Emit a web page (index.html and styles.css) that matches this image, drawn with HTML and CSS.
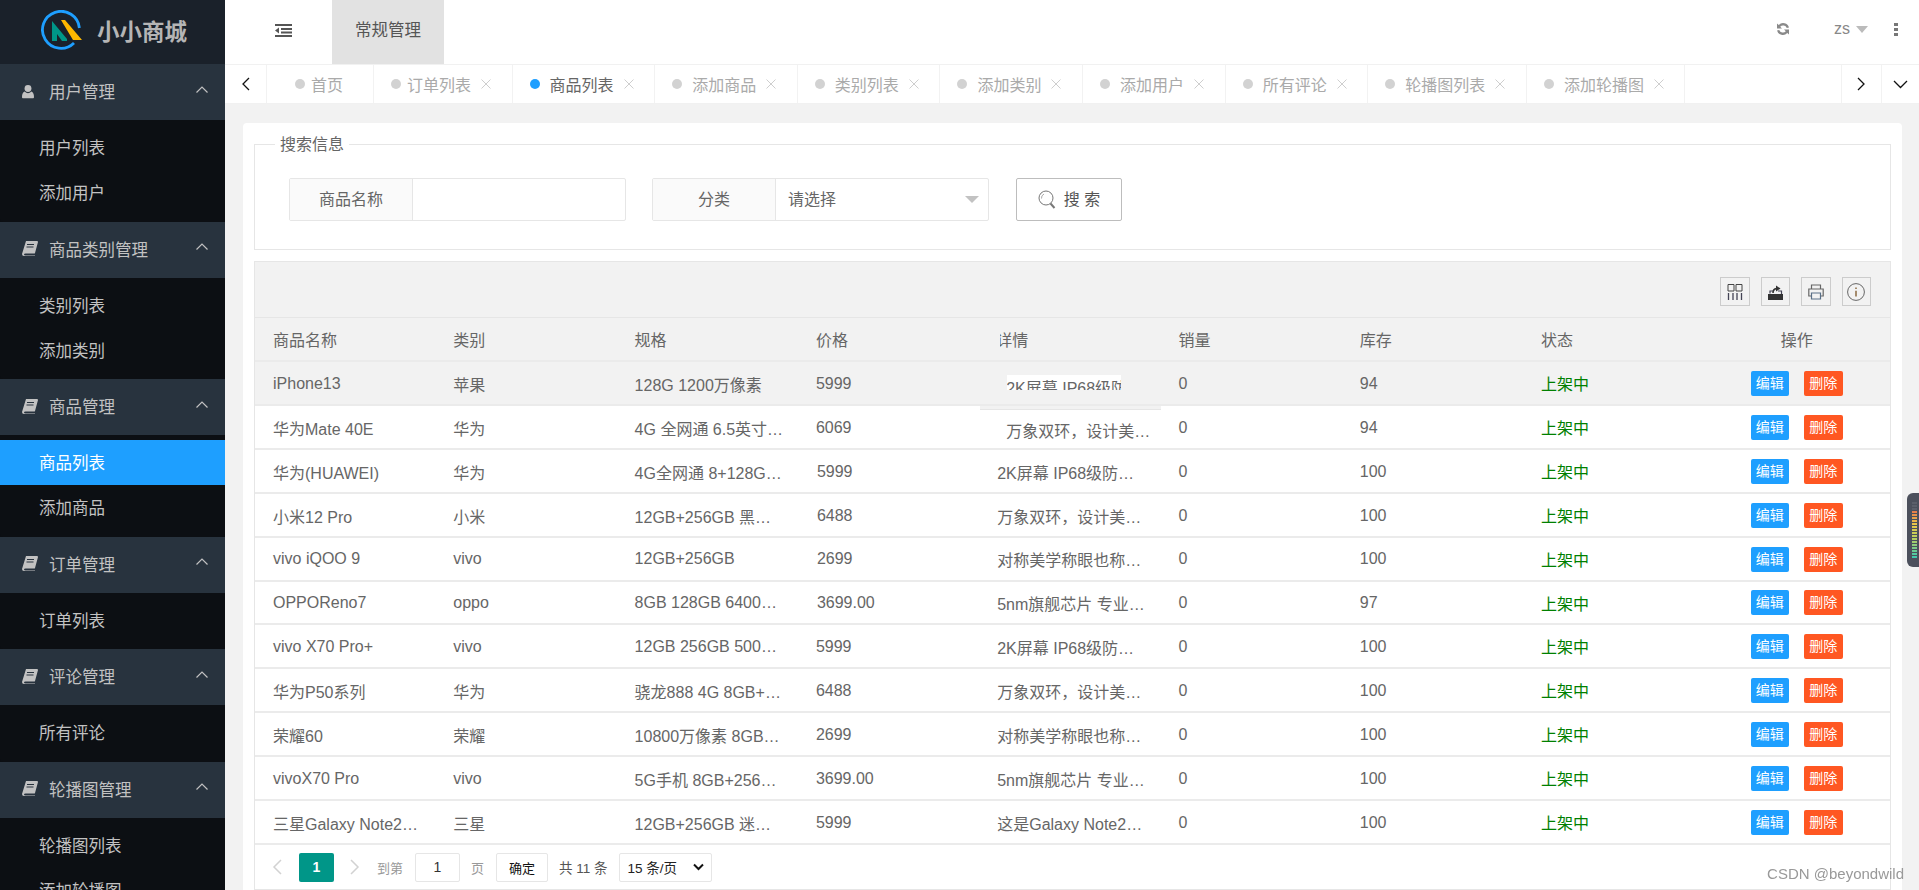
FILE: index.html
```html
<!DOCTYPE html>
<html lang="zh">
<head>
<meta charset="utf-8">
<title>小小商城</title>
<link rel="stylesheet" href="styles.css">
</head>
<body>
<svg class="defs" width="0" height="0" aria-hidden="true">
  <symbol id="book" viewBox="0 0 16 15"><path d="M4 0h11q1 0 1 1l-3 11q0 .5-1 .5H3.500q-1.500 0-1.500 1t1.500 1H13v.5H2q-2 0-2-2z" fill="#c2c2c2"/><path d="M5 3.500h7M4.500 6h7" stroke="#28333e" stroke-width="1"/></symbol>
  <symbol id="up" viewBox="0 0 12 7"><path d="M.5 6.500L6 1l5.500 5.500" fill="none" stroke="#c2c2c2" stroke-width="1.200"/></symbol>
  <symbol id="x" viewBox="0 0 10 10"><path d="M.5.500l9 9M9.500.500l-9 9" fill="none" stroke="#c8c8c8" stroke-width=".9"/></symbol>
</svg>
<div class="app">
  <aside class="side">
    <div class="logo">
      <svg class="logo-mark" width="42" height="40" viewBox="0 0 42 40"><path d="M33 33A18.500 18.500 0 1 1 38.400 18" fill="none" stroke="#1e9fff" stroke-width="2.800"/><path d="M11 11l15 18v2h-5l-5-7v7h-5z" fill="#009688"/><path d="M20 10h4l17 20h-9z" fill="#ffb800"/></svg>
      <span class="logo-text">小小商城</span>
    </div>
    <div class="group"><i class="gicon"><svg width="12" height="15" viewBox="0 0 14 16"><circle cx="7" cy="4.500" r="4" fill="#c2c2c2"/><path d="M1 16q-1 0-1-1.500 0-5 3-6.500 2 2 4 2t4-2q3 1.500 3 6.500 0 1.500-1 1.500z" fill="#c2c2c2"/></svg></i><span class="gname">用户管理</span><svg class="chev" width="12" height="7"><use href="#up"/></svg></div>
    <ul class="sub"><li>用户列表</li><li>添加用户</li></ul>
    <div class="group"><i class="gicon"><svg width="16" height="15"><use href="#book"/></svg></i><span class="gname">商品类别管理</span><svg class="chev" width="12" height="7"><use href="#up"/></svg></div>
    <ul class="sub"><li>类别列表</li><li>添加类别</li></ul>
    <div class="group"><i class="gicon"><svg width="16" height="15"><use href="#book"/></svg></i><span class="gname">商品管理</span><svg class="chev" width="12" height="7"><use href="#up"/></svg></div>
    <ul class="sub"><li class="on">商品列表</li><li>添加商品</li></ul>
    <div class="group"><i class="gicon"><svg width="16" height="15"><use href="#book"/></svg></i><span class="gname">订单管理</span><svg class="chev" width="12" height="7"><use href="#up"/></svg></div>
    <ul class="sub"><li>订单列表</li></ul>
    <div class="group"><i class="gicon"><svg width="16" height="15"><use href="#book"/></svg></i><span class="gname">评论管理</span><svg class="chev" width="12" height="7"><use href="#up"/></svg></div>
    <ul class="sub"><li>所有评论</li></ul>
    <div class="group"><i class="gicon"><svg width="16" height="15"><use href="#book"/></svg></i><span class="gname">轮播图管理</span><svg class="chev" width="12" height="7"><use href="#up"/></svg></div>
    <ul class="sub"><li>轮播图列表</li><li>添加轮播图</li></ul>
  </aside>
  <div class="main">
    <header class="top">
      <div class="fold"><svg width="17" height="13" viewBox="0 0 17 13"><path d="M0 0h17v2H0zM6 4h11v2H6zM6 7.500h11v2H6zM0 11h17v2H0z" fill="#555"/><path d="M4 3.500L0 6.500l4 3z" fill="#555"/></svg></div>
      <div class="topmenu">常规管理</div>
      <div class="topright">
        <svg class="refresh" width="14" height="14" viewBox="0 0 14 14"><path d="M13 5.500A6 6 0 0 0 2.700 3L1 1.500v5h5L4.200 4.700A4 4 0 0 1 10.800 6zM1 8.500A6 6 0 0 0 11.300 11l1.700 1.500v-5H8l1.800 1.800A4 4 0 0 1 3.200 8z" fill="#8a8a8a"/></svg>
        <span class="user">zs</span><span class="tri"></span>
        <span class="dots"><i></i><i></i><i></i></span>
      </div>
    </header>
    <nav class="tabs">
      <div class="tabarrow left"><svg width="9" height="14" viewBox="0 0 9 14"><path d="M8 1L2 7l6 6" fill="none" stroke="#111" stroke-width="1.300"/></svg></div>
      <div class="tabstrip">
        <div class="tab home"><b></b>首页</div>
        <div class="tab order"><b></b>订单列表<svg class="tx" width="10" height="10"><use href="#x"/></svg></div>
        <div class="tab cur"><b></b>商品列表<svg class="tx" width="10" height="10"><use href="#x"/></svg></div>
        <div class="tab"><b></b>添加商品<svg class="tx" width="10" height="10"><use href="#x"/></svg></div>
        <div class="tab"><b></b>类别列表<svg class="tx" width="10" height="10"><use href="#x"/></svg></div>
        <div class="tab"><b></b>添加类别<svg class="tx" width="10" height="10"><use href="#x"/></svg></div>
        <div class="tab"><b></b>添加用户<svg class="tx" width="10" height="10"><use href="#x"/></svg></div>
        <div class="tab"><b></b>所有评论<svg class="tx" width="10" height="10"><use href="#x"/></svg></div>
        <div class="tab"><b></b>轮播图列表<svg class="tx" width="10" height="10"><use href="#x"/></svg></div>
        <div class="tab"><b></b>添加轮播图<svg class="tx" width="10" height="10"><use href="#x"/></svg></div>
      </div>
      <div class="tabarrow right"><svg width="9" height="14" viewBox="0 0 9 14"><path d="M1 1l6 6-6 6" fill="none" stroke="#111" stroke-width="1.300"/></svg></div>
      <div class="tabarrow down"><svg width="15" height="9" viewBox="0 0 15 9"><path d="M1 1l6.500 6.500L14 1" fill="none" stroke="#111" stroke-width="1.300"/></svg></div>
    </nav>
    <main class="body">
      <section class="card">
        <fieldset class="search">
          <legend>搜索信息</legend>
          <div class="form">
            <div class="field f1"><label>商品名称</label><div class="ctrl"></div></div>
            <div class="field f2"><label>分类</label><div class="ctrl sel"><span>请选择</span><i class="seltri"></i></div></div>
            <button class="sbtn" type="button"><svg width="18" height="19" viewBox="0 0 18 19"><circle cx="8" cy="8" r="7" fill="none" stroke="#777" stroke-width="1"/><path d="M3.500 8.500a4.500 4.500 0 0 1 2.500-4.500" fill="none" stroke="#aaa"/><path d="M12.500 13.500l4 4.500" stroke="#777" stroke-width="2"/></svg><span>搜 索</span></button>
          </div>
        </fieldset>
        <div class="tablewrap">
          <div class="toolbar">
            <span class="tool"><svg width="16" height="16" viewBox="0 0 16 16"><path d="M1 .5h6v6.500H1zM9 .5h6v6.500H9z" fill="none" stroke="#444"/><path d="M1.500 9v7M6 9v7M10 9v7M14.500 9v7" stroke="#445" stroke-width="1.300"/></svg></span>
            <span class="tool"><svg width="15" height="16" viewBox="0 0 15 16"><path d="M0 10h15v6H0z" fill="#333"/><path d="M2 9.500V7h3M10 7h3.500v3" fill="none" stroke="#445" stroke-width="1.200"/><path d="M5 9q0-4 3.500-4.500" fill="none" stroke="#333" stroke-width="1.600"/><path d="M8 1.500l4.500 3L8 7.500z" fill="#333"/></svg></span>
            <span class="tool"><svg width="16" height="16" viewBox="0 0 16 16"><path d="M3.500 5V1h9v4M3.500 12H.8V5h14.400v7h-2.700" fill="none" stroke="#666" stroke-width="1.200"/><path d="M3.500 9h9v6h-9z" fill="none" stroke="#5a7088" stroke-width="1.200"/></svg></span>
            <span class="tool"><svg width="18" height="18" viewBox="0 0 18 18"><circle cx="9" cy="9" r="8.400" fill="none" stroke="#666" stroke-width="1"/><path d="M9 4.500v1.600M9 7.800v5.700" stroke="#8a6a40" stroke-width="1.500"/></svg></span>
          </div>
          <table class="grid">
            <colgroup><col class="cw"><col class="cw"><col class="cw"><col class="cw"><col class="cw"><col class="cw"><col class="cw"><col class="cw"><col></colgroup>
            <thead><tr><th>商品名称</th><th>类别</th><th>规格</th><th>价格</th><th><span class="hd-clip">详情</span></th><th>销量</th><th>库存</th><th>状态</th><th class="ops">操作</th></tr></thead>
            <tbody>
              <tr class="hover"><td>iPhone13</td><td>苹果</td><td>128G 1200万像素</td><td>5999</td><td><span class="clip">2K屏幕 IP68级防</span></td><td>0</td><td>94</td><td class="st">上架中</td><td class="ops"><a class="b blue">编辑</a><a class="b red">删除</a></td></tr>
              <tr><td>华为Mate 40E</td><td>华为</td><td>4G 全网通 6.5英寸…</td><td>6069</td><td class="nudge">万象双环，设计美…</td><td>0</td><td>94</td><td class="st">上架中</td><td class="ops"><a class="b blue">编辑</a><a class="b red">删除</a></td></tr>
              <tr><td>华为(HUAWEI)</td><td>华为</td><td>4G全网通 8+128G…</td><td class="shift">5999</td><td>2K屏幕 IP68级防…</td><td>0</td><td>100</td><td class="st">上架中</td><td class="ops"><a class="b blue">编辑</a><a class="b red">删除</a></td></tr>
              <tr><td>小米12 Pro</td><td>小米</td><td>12GB+256GB 黑…</td><td class="shift">6488</td><td>万象双环，设计美…</td><td>0</td><td>100</td><td class="st">上架中</td><td class="ops"><a class="b blue">编辑</a><a class="b red">删除</a></td></tr>
              <tr class="up"><td>vivo iQOO 9</td><td>vivo</td><td>12GB+256GB</td><td class="shift">2699</td><td>对称美学称眼也称…</td><td>0</td><td>100</td><td class="st">上架中</td><td class="ops"><a class="b blue">编辑</a><a class="b red">删除</a></td></tr>
              <tr class="short up"><td>OPPOReno7</td><td>oppo</td><td>8GB 128GB 6400…</td><td class="shift">3699.00</td><td>5nm旗舰芯片 专业…</td><td>0</td><td>97</td><td class="st">上架中</td><td class="ops"><a class="b blue">编辑</a><a class="b red">删除</a></td></tr>
              <tr><td>vivo X70 Pro+</td><td>vivo</td><td>12GB 256GB 500…</td><td>5999</td><td>2K屏幕 IP68级防…</td><td>0</td><td>100</td><td class="st">上架中</td><td class="ops"><a class="b blue">编辑</a><a class="b red">删除</a></td></tr>
              <tr><td>华为P50系列</td><td>华为</td><td>骁龙888 4G 8GB+…</td><td>6488</td><td>万象双环，设计美…</td><td>0</td><td>100</td><td class="st">上架中</td><td class="ops"><a class="b blue">编辑</a><a class="b red">删除</a></td></tr>
              <tr><td>荣耀60</td><td>荣耀</td><td>10800万像素 8GB…</td><td>2699</td><td>对称美学称眼也称…</td><td>0</td><td>100</td><td class="st">上架中</td><td class="ops"><a class="b blue">编辑</a><a class="b red">删除</a></td></tr>
              <tr><td>vivoX70 Pro</td><td>vivo</td><td>5G手机 8GB+256…</td><td>3699.00</td><td>5nm旗舰芯片 专业…</td><td>0</td><td>100</td><td class="st">上架中</td><td class="ops"><a class="b blue">编辑</a><a class="b red">删除</a></td></tr>
              <tr><td>三星Galaxy Note2…</td><td>三星</td><td>12GB+256GB 迷…</td><td>5999</td><td>这是Galaxy Note2…</td><td>0</td><td>100</td><td class="st">上架中</td><td class="ops"><a class="b blue">编辑</a><a class="b red">删除</a></td></tr>
            </tbody>
          </table>
          <div class="pager">
            <svg class="pg-arrow" width="11" height="16" viewBox="0 0 11 16"><path d="M9 1L2 8l7 7" fill="none" stroke="#d2d2d2" stroke-width="1.500"/></svg>
            <span class="pg-cur">1</span>
            <svg class="pg-arrow nx" width="11" height="16" viewBox="0 0 11 16"><path d="M2 1l7 7-7 7" fill="none" stroke="#d2d2d2" stroke-width="1.500"/></svg>
            <span class="pg-t to">到第</span>
            <span class="pg-in">1</span>
            <span class="pg-t pg">页</span>
            <span class="pg-ok">确定</span>
            <span class="pg-total">共 11 条</span>
            <span class="pg-size">15 条/页<svg width="11" height="8" viewBox="0 0 11 8"><path d="M1 1.500L5.500 6 10 1.500" fill="none" stroke="#111" stroke-width="2"/></svg></span>
          </div>
        </div>
      </section>
    </main>
  </div>
</div>
<div class="edgewidget"><i class="meter"></i></div>
<div class="mark">CSDN @beyondwild</div>
</body>
</html>
```
FILE: styles.css
```css
*{box-sizing:border-box}
html,body{margin:0;height:100%;overflow:hidden}
body{font-family:"Liberation Sans","Noto Sans CJK SC",sans-serif;font-size:16px;color:#666;background:#f2f2f2}
ul{list-style:none;margin:0;padding:0}
.defs{position:absolute}
.app{display:flex;height:890px}

.side{width:225px;flex:none;background:#0c0f13;overflow:hidden;color:#c2c2c2}
.logo{height:64px;background:#1a212a;display:flex;align-items:center;padding:0 0 4px 41px}
.logo-mark{flex:none;margin-right:14px}
.logo-text{font-size:22.500px;font-weight:700;color:#b5b5b5}
.group{height:56px;background:#28333e;display:flex;align-items:center;padding:0 17px 2px 22px;font-size:16.500px}
.gicon{width:27px;display:flex;font-style:normal;flex:none}
.gname{flex:1}
.chev{margin-top:-4px}
.sub{padding:5px 0 6.500px;background:#0c0f13;border-radius:0 0 3px 3px}
.sub li{height:45px;padding:0 0 1px 39px;display:flex;align-items:center;font-size:16.500px;color:#c2c2c2}
.sub .on{background:#1e9fff;color:#fff}

.main{flex:1;min-width:0;display:flex;flex-direction:column}
.top{height:64px;background:#fff;display:flex;align-items:center;flex:none}
.fold{width:107px;display:flex;justify-content:center;padding:0 0 4px 9px}
.topmenu{width:112px;height:64px;background:#e2e2e2;color:#555;font-size:16.500px;display:flex;align-items:center;justify-content:center;padding-bottom:6px}
.topright{margin-left:auto;display:flex;align-items:center;padding:0 21px 6px 0;color:#999}
.refresh{margin-right:44px}
.user{font-size:16px;color:#888}
.tri{width:0;height:0;border:6px solid transparent;border-top:7px solid #bbb;border-bottom:0;margin:0 26px 0 6px}
.dots{display:flex;flex-direction:column;gap:2px}
.dots i{width:4px;height:3px;background:#777;display:block}

.tabs{height:40px;flex:none;display:flex;background:#fff;border-top:1px solid #f1f1f1;border-bottom:1px solid #f1f1f1}
.tabarrow{display:flex;align-items:center;justify-content:center;flex:none;border-left:1px solid #f2f2f2}
.tabarrow.left{width:42px;border-left:0;border-right:1px solid #f2f2f2}
.tabarrow.right{width:40px}
.tabarrow.down{width:38px}
.tabstrip{flex:1;display:flex;min-width:0}
.tab{display:flex;align-items:center;padding:0 20.600px 0 17px;font-size:16px;color:#aaa;border-right:1px solid #f2f2f2;white-space:nowrap}
.tab b{width:10px;height:10px;border-radius:50%;background:#d2d2d2;margin-right:10px;flex:none}
.tab.order b{margin-right:6px}
.tab.home{width:107px;padding-left:28px}
.tab.home b{margin-right:6px}
.tab.cur{color:#666}
.tab.cur b{background:#1e9fff}
.tx{margin-left:10px;flex:none}

.body{flex:1;min-height:0;overflow:hidden;padding:19px 17px 0 18px;background:#f2f2f2}
.card{background:#fff;border-radius:4px 4px 0 0;padding:11px 11px 0;min-height:100%}
.search{margin:0;height:116px;border:1px solid #e6e6e6;padding:0 0 0 34px}
.search legend{font-size:16px;line-height:18px;height:20px;color:#666;padding:2px 5px 0;margin-left:-14px}
.form{display:flex;align-items:flex-start;padding-top:24px}
.field{display:flex;height:43px;border:1px solid #e6e6e6;border-radius:2px}
.field label{width:123px;flex:none;background:#fafafa;border-right:1px solid #e6e6e6;display:flex;align-items:center;justify-content:center;font-size:16px;color:#666;padding-bottom:3px}
.f1{width:337px;margin-right:26px}
.f2{width:337px;margin-right:27px}
.ctrl{flex:1}
.sel{display:flex;align-items:center;justify-content:space-between;padding:0 9px 0 12px}
.sel span{margin-top:-3px}
.seltri{width:0;height:0;border:7px solid transparent;border-top:7px solid #c2c2c2;border-bottom:0}
.sbtn{width:106px;height:43px;background:#fff;border:1px solid #bdbdbd;border-radius:2px;font:16px "Liberation Sans","Noto Sans CJK SC",sans-serif;color:#555;display:flex;align-items:center;justify-content:center;gap:8px;padding:0}
.sbtn span{margin-top:-3px}

.tablewrap{margin-top:11px;border:1px solid #e6e6e6;background:#f2f2f2}
.toolbar{height:56px;display:flex;justify-content:flex-end;align-items:center;gap:11px;padding-right:19px;border-bottom:1px solid #e6e6e6}
.tool{width:29.500px;height:29px;border:1px solid #ccc;display:flex;align-items:center;justify-content:center;margin-top:4px}
.grid{width:100%;border-collapse:separate;border-spacing:0;table-layout:fixed;background:#fff}
.grid .cw{width:181.300px}
.grid th,.grid td{height:44px;padding:1px 0 0 17px;font-weight:400;text-align:left;font-size:16px;border-bottom:2px solid #ebebeb;white-space:nowrap;color:#666}
.grid th:first-child,.grid td:first-child{padding-left:18px}
.grid thead th{background:#f2f2f2;padding-top:0}
.grid tr.hover td{background:#f2f2f2}
.grid tr.short td{height:43px}
.grid tr.up td{padding-top:0}
.grid td.st{color:#008000;padding-top:0}
.grid th.ops,.grid td.ops{text-align:center;padding:0 2px 0 0}
.grid td.shift{padding-left:18px}
.grid td.nudge{padding:6px 0 0 26px;box-shadow:inset 0 3px #f2f2f2,inset 0 4px #e6e6e6}
.hd-clip{display:inline-block;width:28px;margin-left:3px;overflow:hidden;text-indent:-4px;vertical-align:middle}
.clip{display:block;width:114px;height:15px;line-height:27px;margin:-3px 0 0 10px;overflow:hidden;background:#fff;text-indent:-1px}
.b{display:inline-block;width:38px;height:25px;line-height:25px;font-size:14px;color:#fff;border-radius:2px;text-align:center;vertical-align:middle}
.blue{background:#1e9fff}
.red{width:39px;background:#ff5722;margin-left:15px}

.pager{height:44px;background:#fff;display:flex;align-items:center;padding-left:17px;color:#999;font-size:13px}
.pg-arrow{flex:none}
.pg-cur{width:35px;height:29px;margin-left:16px;background:#009688;color:#fff;display:flex;align-items:center;justify-content:center;border-radius:2px;font-size:14px;font-weight:700}
.nx{margin-left:15px}
.to{margin-left:17px}
.pg-in{width:45px;height:29px;margin-left:12px;border:1px solid #e6e6e6;border-radius:2px;display:flex;align-items:center;justify-content:center;background:#fff;color:#333;font-size:14px}
.pg{margin-left:11px}
.pg-ok{width:52px;height:29px;margin-left:12px;border:1px solid #e6e6e6;border-radius:2px;display:flex;align-items:center;justify-content:center;color:#111}
.pg-total{margin-left:11px;color:#555;font-size:13.500px}
.pg-size{width:93px;height:29px;margin-left:11px;border:1px solid #e6e6e6;border-radius:2px;display:flex;align-items:center;justify-content:space-between;padding:0 7px 0 8px;color:#222;background:#fff;font-size:13.500px}

.edgewidget{position:fixed;left:1907px;top:493px;width:24px;height:74px;background:#4c505c;border-radius:6px}
.meter{position:absolute;left:5px;top:9px;width:5px;height:56px;background:repeating-linear-gradient(transparent 0 2px,#4c505c 2px 3px),linear-gradient(#5b5f6a 0 8px,#e8734a 8px,#e8c84a 40%,#b8d060 65%,#3cc8b0 100%)}
.mark{position:fixed;right:15px;bottom:8px;font-size:15px;color:#999}
```
